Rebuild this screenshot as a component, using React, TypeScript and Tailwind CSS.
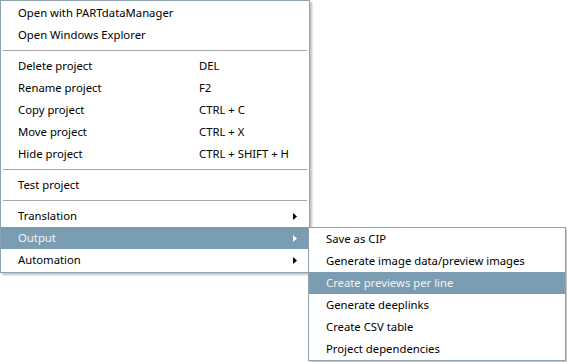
import { ReactNode } from "react";

const font = { fontFamily: '"Segoe UI", "Noto Sans", "Open Sans", sans-serif' };

function Arrow({ light }: { light?: boolean }) {
  return (
    <svg width="4" height="7" viewBox="0 0 4 7" className="absolute right-[12px] top-[8px]">
      <path d="M0 0 L4 3.5 L0 7 Z" fill={light ? "#ffffff" : "#000000"} />
    </svg>
  );
}

function Row({ label, shortcut, active, arrow, children }: { label: string; shortcut?: string; active?: boolean; arrow?: boolean; children?: ReactNode }) {
  return (
    <div className={`relative flex h-[22px] items-center pt-px ${active ? "bg-[#7a9db2] text-[#f2f2f2]" : "text-black"}`}>
      <span className="pl-[17px] w-[198px]">{label}</span>
      {shortcut && <span>{shortcut}</span>}
      {arrow && <Arrow light={active} />}
      {children}
    </div>
  );
}

function Sep() {
  return (
    <div className="flex h-[9px] items-center px-[2px]">
      <div className="h-px w-full bg-[#a6a6a6]" />
    </div>
  );
}

const outputItems = [
  "Save as CIP",
  "Generate image data/preview images",
  "Create previews per line",
  "Generate deeplinks",
  "Create CSV table",
  "Project dependencies",
];

export default function App() {
  return (
    <div className="w-[567px] h-[362px] bg-white overflow-hidden text-[11.3px]" style={font}>
      <div className="relative w-[310px] border border-[#8ea2af] bg-white py-[1px] shadow-[2px_2px_2px_rgba(0,0,0,0.25)]">
        <Row label="Open with PARTdataManager" />
        <Row label="Open Windows Explorer" />
        <Sep />
        <Row label="Delete project" shortcut="DEL" />
        <Row label="Rename project" shortcut="F2" />
        <Row label="Copy project" shortcut="CTRL + C" />
        <Row label="Move project" shortcut="CTRL + X" />
        <Row label="Hide project" shortcut="CTRL + SHIFT + H" />
        <Sep />
        <Row label="Test project" />
        <Sep />
        <Row label="Translation" arrow />
        <Row label="Output" arrow active>
          <div className="absolute left-[307px] top-0 z-10 w-[258px] border border-[#8ea2af] bg-white shadow-[2px_2px_2px_rgba(0,0,0,0.25)]">
            {outputItems.map((item) => (
              <div
                key={item}
                className={`flex h-[22px] items-center pt-px pl-[17px] ${item === "Create previews per line" ? "bg-[#7a9db2] text-[#f2f2f2]" : "text-black"}`}
              >
                {item}
              </div>
            ))}
          </div>
        </Row>
        <Row label="Automation" arrow />
      </div>
    </div>
  );
}
